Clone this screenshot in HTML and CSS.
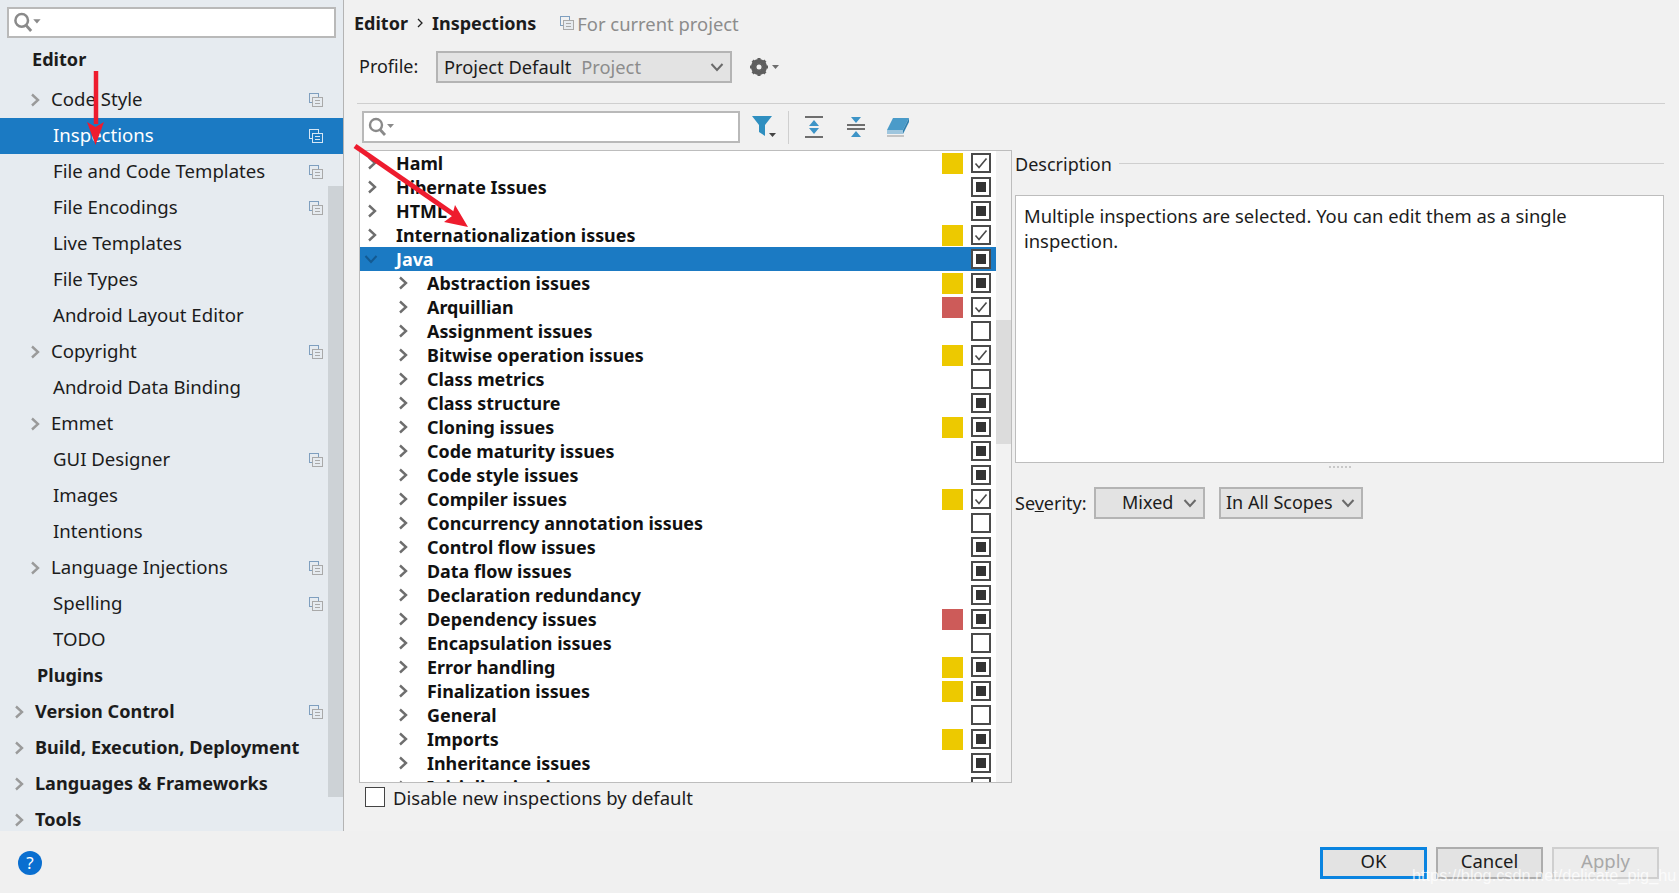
FILE: index.html
```html
<!DOCTYPE html>
<html>

<head>
    <link rel="stylesheet" href="styles.css">
</head>

<body>
    <svg class="defs" width="0" height="0">
        <symbol id="copy" viewBox="0 0 14 14">
            <rect x="0.5" y="0.5" width="9" height="9" fill="none" stroke="#7f9fbf"/>
            <rect x="3.5" y="4.5" width="10" height="9" fill="#e6ebf0" stroke="#a9a9a9"/>
            <path d="M6 7.5h5M6 10.5h5" stroke="#a9a9a9"/>
        </symbol>
        <symbol id="copy-sel" viewBox="0 0 14 14">
            <rect x="0.5" y="0.5" width="9" height="9" fill="none" stroke="#d5e6f5"/>
            <rect x="3.5" y="4.5" width="10" height="9" fill="#1b7ac3" stroke="#d5e6f5"/>
            <path d="M6 7.5h5M6 10.5h5" stroke="#d5e6f5"/>
        </symbol>
        <symbol id="chev" viewBox="0 0 10 14">
            <path d="M2 1.5 8 7l-6 5.5" fill="none" stroke="currentColor" stroke-width="2.400"/>
        </symbol>
        <symbol id="chev-down" viewBox="0 0 14 10">
            <path d="M1.5 2 7 8l5.5-6" fill="none" stroke="currentColor" stroke-width="2"/>
        </symbol>
        <symbol id="tick" viewBox="0 0 14 14">
            <path d="M1.5 7.5 5 11.5 12.5 2.5" fill="none" stroke="#4a4a4a" stroke-width="1.6"/>
        </symbol>
        <symbol id="lens" viewBox="0 0 28 20">
            <circle cx="8" cy="8" r="6" fill="none" stroke="#8a8a8a" stroke-width="2.4"/>
            <path d="M12 12.5 17 18" stroke="#8a8a8a" stroke-width="2.8"/>
            <path d="M19 7h7l-3.500 4z" fill="#8a8a8a"/>
        </symbol>
    </svg>

    <div class="app">
        <div class="top">
            <div class="sidebar">
                <div class="side-search">
                    <div class="search-box side-box"><svg class="lens"><use href="#lens"/></svg></div>
                </div>
                <div class="side-row group head-editor">Editor</div>
                <div class="side-row lvl1 has-chev"><svg class="s-chev"><use href="#chev"/></svg>Code Style<svg class="copy"><use href="#copy"/></svg></div>
                <div class="side-row lvl1 selected">Inspections<svg class="copy"><use href="#copy-sel"/></svg></div>
                <div class="side-row lvl1">File and Code Templates<svg class="copy"><use href="#copy"/></svg></div>
                <div class="side-row lvl1">File Encodings<svg class="copy"><use href="#copy"/></svg></div>
                <div class="side-row lvl1">Live Templates</div>
                <div class="side-row lvl1">File Types</div>
                <div class="side-row lvl1">Android Layout Editor</div>
                <div class="side-row lvl1 has-chev"><svg class="s-chev"><use href="#chev"/></svg>Copyright<svg class="copy"><use href="#copy"/></svg></div>
                <div class="side-row lvl1">Android Data Binding</div>
                <div class="side-row lvl1 has-chev"><svg class="s-chev"><use href="#chev"/></svg>Emmet</div>
                <div class="side-row lvl1">GUI Designer<svg class="copy"><use href="#copy"/></svg></div>
                <div class="side-row lvl1">Images</div>
                <div class="side-row lvl1">Intentions</div>
                <div class="side-row lvl1 has-chev"><svg class="s-chev"><use href="#chev"/></svg>Language Injections<svg class="copy"><use href="#copy"/></svg></div>
                <div class="side-row lvl1">Spelling<svg class="copy"><use href="#copy"/></svg></div>
                <div class="side-row lvl1">TODO</div>
                <div class="side-row group head-plugins">Plugins</div>
                <div class="side-row group top-level"><svg class="s-chev"><use href="#chev"/></svg>Version Control<svg class="copy"><use href="#copy"/></svg></div>
                <div class="side-row group top-level"><svg class="s-chev"><use href="#chev"/></svg>Build, Execution, Deployment</div>
                <div class="side-row group top-level"><svg class="s-chev"><use href="#chev"/></svg>Languages &amp; Frameworks</div>
                <div class="side-row group top-level"><svg class="s-chev"><use href="#chev"/></svg>Tools</div>
                <div class="side-thumb"></div>
            </div>

            <div class="main">
                <div class="crumbs">
                    <b>Editor</b>
                    <svg class="crumb-sep" viewBox="0 0 6 10"><path d="M1 1l4 4-4 4" fill="none" stroke="#222" stroke-width="1.300"/></svg>
                    <b>Inspections</b>
                    <svg class="copy crumb-copy"><use href="#copy"/></svg>
                    <span class="muted">For current project</span>
                </div>

                <div class="profile">
                    <span class="profile-label">Profile:</span>
                    <div class="combo profile-combo">
                        <span>Project Default</span><span class="combo-muted">Project</span>
                        <svg class="combo-chev"><use href="#chev-down"/></svg>
                    </div>
                    <svg class="gear" viewBox="0 0 30 20">
                        <circle cx="10" cy="10" r="6" fill="none" stroke="#5f5f5f" stroke-width="4"/>
                        <path d="M10 1v18M1 10h18M3.600 3.600l12.800 12.800M16.400 3.600 3.600 16.400" stroke="#5f5f5f" stroke-width="3"/>
                        <circle cx="10" cy="10" r="2.500" fill="#f2f2f2"/>
                        <path d="M23 8h7l-3.500 4z" fill="#6e6e6e"/>
                    </svg>
                </div>

                <div class="divider"></div>

                <div class="toolbar">
                    <div class="search-box tree-box"><svg class="lens"><use href="#lens"/></svg></div>
                    <svg class="tool filter" viewBox="0 0 24 22">
                        <path d="M0 0h20l-7 9v11l-6-4V9z" fill="#2f8fc0"/>
                        <path d="M17 17h7l-3.500 4z" fill="#444"/>
                    </svg>
                    <div class="tool-sep"></div>
                    <svg class="tool t-expand" viewBox="0 0 20 22">
                        <path d="M1 1h18M1 21h18" stroke="#6e6e6e" stroke-width="2"/>
                        <path d="M10 4l5 6H5zM10 18l-5-6h10z" fill="#3d94c7"/>
                    </svg>
                    <svg class="tool t-collapse" viewBox="0 0 20 22">
                        <path d="M1 9h18M1 13h18" stroke="#6e6e6e" stroke-width="2"/>
                        <path d="M10 7 5 1h10zM10 15l5 6H5z" fill="#3d94c7"/>
                    </svg>
                    <svg class="tool t-erase" viewBox="0 0 24 22">
                        <path d="M7 2h16l-6 12H1z" fill="#4a9bc9"/>
                        <path d="M1 14h16v4H1z" fill="#9fc6de"/>
                        <path d="M17 14l6-12v4l-6 12z" fill="#2f7fae"/>
                        <path d="M1 20h17" stroke="#b5b5b5" stroke-width="1.500"/>
                    </svg>
                </div>

                <div class="panels">
                    <div class="left-col">
                        <div class="tree">
                            <div class="tree-list">
                                <div class="row"><svg class="t-chev"><use href="#chev"/></svg><span class="name">Haml</span><i class="sev yellow"></i><span class="chk"><svg><use href="#tick"/></svg></span></div>
                                <div class="row"><svg class="t-chev"><use href="#chev"/></svg><span class="name">Hibernate Issues</span><i class="sev"></i><span class="chk mixed"></span></div>
                                <div class="row"><svg class="t-chev"><use href="#chev"/></svg><span class="name">HTML</span><i class="sev"></i><span class="chk mixed"></span></div>
                                <div class="row"><svg class="t-chev"><use href="#chev"/></svg><span class="name">Internationalization issues</span><i class="sev yellow"></i><span class="chk"><svg><use href="#tick"/></svg></span></div>
                                <div class="row selected"><svg class="t-chev-down"><use href="#chev-down"/></svg><span class="name">Java</span><i class="sev"></i><span class="chk mixed"></span></div>
                                <div class="row sub"><svg class="t-chev"><use href="#chev"/></svg><span class="name">Abstraction issues</span><i class="sev yellow"></i><span class="chk mixed"></span></div>
                                <div class="row sub"><svg class="t-chev"><use href="#chev"/></svg><span class="name">Arquillian</span><i class="sev red"></i><span class="chk"><svg><use href="#tick"/></svg></span></div>
                                <div class="row sub"><svg class="t-chev"><use href="#chev"/></svg><span class="name">Assignment issues</span><i class="sev"></i><span class="chk"></span></div>
                                <div class="row sub"><svg class="t-chev"><use href="#chev"/></svg><span class="name">Bitwise operation issues</span><i class="sev yellow"></i><span class="chk"><svg><use href="#tick"/></svg></span></div>
                                <div class="row sub"><svg class="t-chev"><use href="#chev"/></svg><span class="name">Class metrics</span><i class="sev"></i><span class="chk"></span></div>
                                <div class="row sub"><svg class="t-chev"><use href="#chev"/></svg><span class="name">Class structure</span><i class="sev"></i><span class="chk mixed"></span></div>
                                <div class="row sub"><svg class="t-chev"><use href="#chev"/></svg><span class="name">Cloning issues</span><i class="sev yellow"></i><span class="chk mixed"></span></div>
                                <div class="row sub"><svg class="t-chev"><use href="#chev"/></svg><span class="name">Code maturity issues</span><i class="sev"></i><span class="chk mixed"></span></div>
                                <div class="row sub"><svg class="t-chev"><use href="#chev"/></svg><span class="name">Code style issues</span><i class="sev"></i><span class="chk mixed"></span></div>
                                <div class="row sub"><svg class="t-chev"><use href="#chev"/></svg><span class="name">Compiler issues</span><i class="sev yellow"></i><span class="chk"><svg><use href="#tick"/></svg></span></div>
                                <div class="row sub"><svg class="t-chev"><use href="#chev"/></svg><span class="name">Concurrency annotation issues</span><i class="sev"></i><span class="chk"></span></div>
                                <div class="row sub"><svg class="t-chev"><use href="#chev"/></svg><span class="name">Control flow issues</span><i class="sev"></i><span class="chk mixed"></span></div>
                                <div class="row sub"><svg class="t-chev"><use href="#chev"/></svg><span class="name">Data flow issues</span><i class="sev"></i><span class="chk mixed"></span></div>
                                <div class="row sub"><svg class="t-chev"><use href="#chev"/></svg><span class="name">Declaration redundancy</span><i class="sev"></i><span class="chk mixed"></span></div>
                                <div class="row sub"><svg class="t-chev"><use href="#chev"/></svg><span class="name">Dependency issues</span><i class="sev red"></i><span class="chk mixed"></span></div>
                                <div class="row sub"><svg class="t-chev"><use href="#chev"/></svg><span class="name">Encapsulation issues</span><i class="sev"></i><span class="chk"></span></div>
                                <div class="row sub"><svg class="t-chev"><use href="#chev"/></svg><span class="name">Error handling</span><i class="sev yellow"></i><span class="chk mixed"></span></div>
                                <div class="row sub"><svg class="t-chev"><use href="#chev"/></svg><span class="name">Finalization issues</span><i class="sev yellow"></i><span class="chk mixed"></span></div>
                                <div class="row sub"><svg class="t-chev"><use href="#chev"/></svg><span class="name">General</span><i class="sev"></i><span class="chk"></span></div>
                                <div class="row sub"><svg class="t-chev"><use href="#chev"/></svg><span class="name">Imports</span><i class="sev yellow"></i><span class="chk mixed"></span></div>
                                <div class="row sub"><svg class="t-chev"><use href="#chev"/></svg><span class="name">Inheritance issues</span><i class="sev"></i><span class="chk mixed"></span></div>
                                <div class="row sub"><svg class="t-chev"><use href="#chev"/></svg><span class="name">Initialization issues</span><i class="sev"></i><span class="chk mixed"></span></div>
                            </div>
                            <div class="tree-track"><div class="tree-thumb"></div></div>
                        </div>
                        <div class="disable-row"><span class="chk plain"></span><span>Disable new inspections by default</span></div>
                    </div>

                    <div class="right-col">
                        <div class="desc-title"><span>Description</span><div class="desc-line"></div></div>
                        <div class="desc-box">Multiple inspections are selected. You can edit them as a single inspection.</div>
                        <div class="splitter"></div>
                        <div class="severity">
                            <span class="sev-label">Se<u>v</u>erity:</span>
                            <div class="combo mixed-combo"><span>Mixed</span><svg class="combo-chev"><use href="#chev-down"/></svg></div>
                            <div class="combo scope-combo"><span>In All Scopes</span><svg class="combo-chev"><use href="#chev-down"/></svg></div>
                        </div>
                    </div>
                </div>
            </div>
        </div>

        <div class="footer">
            <div class="help">?</div>
            <div class="buttons">
                <div class="btn default">OK</div>
                <div class="btn">Cancel</div>
                <div class="btn disabled">Apply</div>
            </div>
        </div>
    </div>

    <!-- red annotation arrows drawn over the screenshot -->
    <svg class="arrows" width="1679" height="893">
        <path d="M96 71V124" stroke="#ee1c2e" stroke-width="4.500"/>
        <path d="M87 122 95.500 145 104 122 95.500 127z" fill="#ee1c2e"/>
        <path d="M355 146 456 216" stroke="#ee1c2e" stroke-width="5"/>
        <path d="M455 205 468 227 444 222 452 216z" fill="#ee1c2e"/>
    </svg>
    <div class="watermark">https://blog.csdn.net/delicate_pig_hu</div>
</body>

</html>
```
FILE: styles.css
```css
body {
    margin: 0;
    width: 1679px;
    height: 893px;
    overflow: hidden;
    background-color: #f1f1f1;
    color: #1c1c1c;
    font-family: "Noto Sans", "Open Sans", sans-serif;
    font-size: 18px;
    position: relative;
}

.defs {
    position: absolute;
}

.app {
    display: flex;
    flex-direction: column;
    height: 893px;
}

.top {
    display: flex;
    height: 831px;
    overflow: hidden;
}

/* left settings list */
.sidebar {
    width: 343px;
    flex: none;
    height: 831px;
    overflow: hidden;
    position: relative;
    background-color: #e6ebf0;
    border-right: 1px solid #b4b4b4;
}

.side-search {
    height: 41px;
    padding: 7px 0 0 7px;
    box-sizing: border-box;
}

.search-box {
    border: 2px solid #b9b9b9;
    background-color: #fff;
    box-sizing: border-box;
    display: flex;
    align-items: center;
    padding-left: 4px;
}

.side-box {
    width: 329px;
    height: 31px;
}

.side-box .lens {
    width: 30px;
    height: 21px;
}

.lens {
    width: 28px;
    height: 20px;
}

.side-row {
    height: 36px;
    box-sizing: border-box;
    padding-bottom: 2px;
    display: flex;
    align-items: center;
    position: relative;
    white-space: nowrap;
}

.side-row.group {
    font-weight: 700;
    font-size: 18.100px;
}

.head-editor {
    padding-left: 32px;
    padding-bottom: 0;
    margin-bottom: 5px;
}

.head-plugins {
    padding-left: 37px;
}

.top-level {
    padding-left: 35px;
}

.lvl1 {
    padding-left: 53px;
    padding-bottom: 4px;
    font-size: 18.600px;
}

.lvl1.has-chev {
    padding-left: 51px;
}

.side-row.selected {
    background-color: #1b7ac3;
    color: #fff;
}

.s-chev {
    position: absolute;
    width: 10px;
    height: 14px;
    left: 30px;
    top: 11px;
    color: #9a9a9a;
}

.top-level .s-chev {
    left: 14px;
}

.copy {
    position: absolute;
    right: 20px;
    top: 11px;
    width: 14px;
    height: 14px;
}

.side-thumb {
    position: absolute;
    left: 328px;
    top: 186px;
    width: 15px;
    height: 611px;
    background-color: #cdd2d6;
}

/* right hand part */
.main {
    flex: 1;
    min-width: 0;
}

.crumbs {
    height: 46px;
    padding-left: 10px;
    display: flex;
    align-items: center;
}

.crumb-sep {
    width: 6px;
    height: 10px;
    margin: 0 9px;
}

.crumb-copy {
    position: static;
    margin: 0 3px 0 24px;
}

.muted {
    color: #8c8c8c;
    font-size: 18.400px;
}

.profile {
    height: 35px;
    margin-top: 3px;
    padding-left: 15px;
    display: flex;
    align-items: center;
}

.profile-label {
    width: 77px;
    padding-bottom: 2px;
}

.combo {
    box-sizing: border-box;
    height: 32px;
    border: 2px solid #b4b4b4;
    background-color: #e3e3e3;
    display: flex;
    align-items: center;
    position: relative;
    white-space: nowrap;
}

.profile-combo {
    width: 296px;
    padding-left: 6px;
    font-size: 18.300px;
}

.combo-muted {
    color: #8c8c8c;
    margin-left: 10px;
}

.combo-chev {
    position: absolute;
    right: 6px;
    top: 9px;
    width: 14px;
    height: 10px;
    color: #6a6a6a;
}

.gear {
    width: 30px;
    height: 20px;
    margin-left: 17px;
}

.divider {
    height: 1px;
    background-color: #cfcfcf;
    margin: 19px 14px 0 13px;
}

.toolbar {
    height: 32px;
    margin-top: 7px;
    padding-left: 18px;
    display: flex;
    align-items: center;
}

.tree-box {
    width: 378px;
    height: 32px;
}

.tool {
    height: 22px;
    flex: none;
}

.filter {
    width: 24px;
    margin-left: 12px;
}

.tool-sep {
    width: 1px;
    height: 33px;
    background-color: #cfcfcf;
    margin: 0 15px 0 12px;
}

.t-expand {
    width: 20px;
}

.t-collapse {
    width: 20px;
    margin-left: 22px;
}

.t-erase {
    width: 24px;
    margin-left: 20px;
}

.panels {
    display: flex;
    margin-top: 7px;
    padding-left: 15px;
}

.left-col {
    width: 653px;
    flex: none;
}

.tree {
    height: 633px;
    box-sizing: border-box;
    border: 1px solid #bdbdbd;
    background-color: #fff;
    display: flex;
    overflow: hidden;
}

.tree-list {
    width: 636px;
    flex: none;
}

.tree-track {
    flex: 1;
    background-color: #f2f2f2;
}

.tree-thumb {
    margin-top: 169px;
    height: 124px;
    background-color: #dcdcdc;
}

.row {
    height: 24px;
    display: flex;
    align-items: center;
    padding-left: 36px;
    position: relative;
    font-weight: 700;
    font-size: 17.900px;
    color: #111;
    white-space: nowrap;
}

.row.sub {
    padding-left: 67px;
}

.row.selected {
    background-color: #1b7ac3;
    color: #fff;
}

.t-chev,
.t-chev-down {
    position: absolute;
    left: 7px;
    top: 5px;
    width: 10px;
    height: 14px;
    color: #6e6e6e;
}

.t-chev-down {
    left: 4px;
    top: 7px;
    width: 14px;
    height: 10px;
    color: #135a92;
}

.sub .t-chev {
    left: 38px;
}

.name {
    flex: 1;
}

.sev {
    width: 21px;
    height: 21px;
    margin-right: 8px;
}

.sev.yellow {
    background-color: #edc900;
}

.sev.red {
    background-color: #cd5b59;
}

.chk {
    width: 20px;
    height: 20px;
    box-sizing: border-box;
    border: 2px solid #4a4a4a;
    background-color: #fff;
    margin-right: 5px;
    display: flex;
    align-items: center;
    justify-content: center;
    flex: none;
}

.chk svg {
    width: 14px;
    height: 14px;
}

.chk.mixed::before {
    content: "";
    width: 10px;
    height: 10px;
    background-color: #333;
}

.disable-row {
    height: 28px;
    padding-left: 6px;
    display: flex;
    align-items: center;
    font-size: 18.500px;
}

.chk.plain {
    margin-right: 8px;
    border-width: 1px;
    border-color: #444;
}

.right-col {
    width: 649px;
    margin-left: 3px;
    flex: none;
}

.desc-title {
    height: 45px;
    display: flex;
    align-items: flex-start;
}

.desc-title span {
    line-height: 28px;
}

.desc-line {
    flex: 1;
    height: 1px;
    margin: 13px 0 0 7px;
    background-color: #cfcfcf;
}

.desc-box {
    height: 268px;
    box-sizing: border-box;
    border: 1px solid #bdbdbd;
    background-color: #fff;
    padding: 7px 70px 7px 8px;
    line-height: 25px;
    font-size: 18.400px;
}

.splitter {
    width: 22px;
    height: 3px;
    margin: 3px auto 0;
    border-top: 2px dotted #c8c8c8;
    box-sizing: border-box;
}

.severity {
    display: flex;
    align-items: center;
    margin-top: 18px;
}

.sev-label {
    width: 79px;
}

.mixed-combo {
    width: 111px;
    padding: 0 0 2px 26px;
}

.scope-combo {
    width: 144px;
    padding: 0 0 2px 5px;
    margin-left: 14px;
}

/* bottom bar */
.footer {
    height: 62px;
    display: flex;
    justify-content: space-between;
    align-items: flex-start;
    background-color: #f0f0f0;
}

.help {
    width: 24px;
    height: 24px;
    border-radius: 50%;
    margin: 20px 0 0 18px;
    background-color: #0a6fd0;
    color: #fff;
    font-size: 17px;
    line-height: 24px;
    text-align: center;
}

.buttons {
    display: flex;
    gap: 9px;
    margin: 16px 20px 0 0;
}

.btn {
    width: 107px;
    height: 32px;
    box-sizing: border-box;
    border: 2px solid #adadad;
    background-color: #e3e3e3;
    text-align: center;
    line-height: 24px;
    font-size: 18.500px;
}

.btn.default {
    border: 3px solid #0a84e0;
    line-height: 22px;
}

.btn.disabled {
    border-color: #cfcfcf;
    background-color: #ececec;
    color: #a8a8a8;
}

/* overlays */
.arrows {
    position: absolute;
    left: 0;
    top: 0;
    pointer-events: none;
}

.watermark {
    position: absolute;
    left: 1412px;
    top: 866px;
    font-family: "Liberation Sans", sans-serif;
    font-size: 16.300px;
    color: rgba(255, 255, 255, 0.75);
    white-space: nowrap;
}
```
